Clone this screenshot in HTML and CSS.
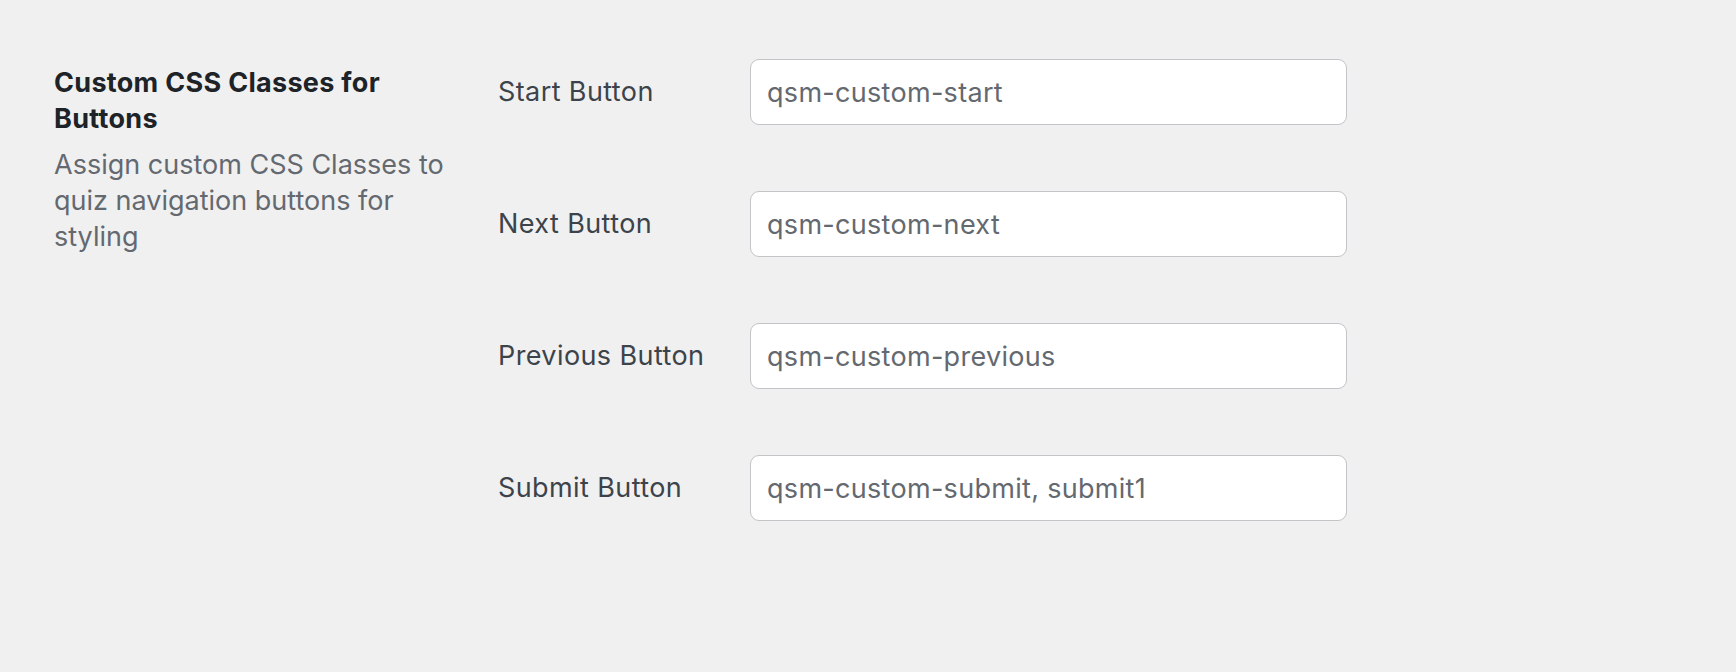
FILE: index.html
```html
<!DOCTYPE html>
<html lang="en">
<head>
<meta charset="utf-8">
<title>Custom CSS Classes for Buttons</title>
<link rel="stylesheet" href="styles.css">
</head>
<body>
<section class="setting">
  <div class="intro">
    <h2 class="intro-title">Custom CSS Classes for Buttons</h2>
    <p class="intro-desc">Assign custom CSS Classes to quiz navigation buttons for styling</p>
  </div>
  <div class="fields">
    <label class="field-label" for="f-start">Start Button</label>
    <input class="field-input" id="f-start" type="text" value="qsm-custom-start">
    <label class="field-label" for="f-next">Next Button</label>
    <input class="field-input" id="f-next" type="text" value="qsm-custom-next">
    <label class="field-label" for="f-prev">Previous Button</label>
    <input class="field-input" id="f-prev" type="text" value="qsm-custom-previous">
    <label class="field-label" for="f-submit">Submit Button</label>
    <input class="field-input" id="f-submit" type="text" value="qsm-custom-submit, submit1">
  </div>
</section>
</body>
</html>
```
FILE: styles.css
```css
html, body {
  margin: 0;
  padding: 0;
  background: #f0f0f1;
  font-family: Inter, "Noto Sans", "Liberation Sans", sans-serif;
}

.setting {
  display: flex;
  align-items: flex-start;
  padding: 59px 0 0 54px;
}

.intro {
  width: 410px;
  margin-right: 34px;
  padding-top: 6px;
}

.intro-title {
  margin: 0 0 10px;
  font-size: 27px;
  line-height: 36px;
  font-weight: 700;
  letter-spacing: 0.3px;
  color: #1d2327;
}

.intro-desc {
  margin: 0;
  font-size: 27px;
  line-height: 36px;
  font-weight: 400;
  color: #646970;
}

.fields {
  display: grid;
  grid-template-columns: 252px 597px;
  row-gap: 66px;
  align-items: center;
}

.field-label {
  font-size: 27px;
  line-height: 36px;
  letter-spacing: 0.4px;
  color: #3c434a;
}

.field-input {
  box-sizing: border-box;
  width: 597px;
  height: 66px;
  margin: 0;
  padding: 0 16px;
  border: 1.5px solid #c3c4c7;
  border-radius: 9px;
  background: #fff;
  font-family: inherit;
  font-size: 27px;
  letter-spacing: 0.3px;
  color: #646970;
  outline: none;
}
```
